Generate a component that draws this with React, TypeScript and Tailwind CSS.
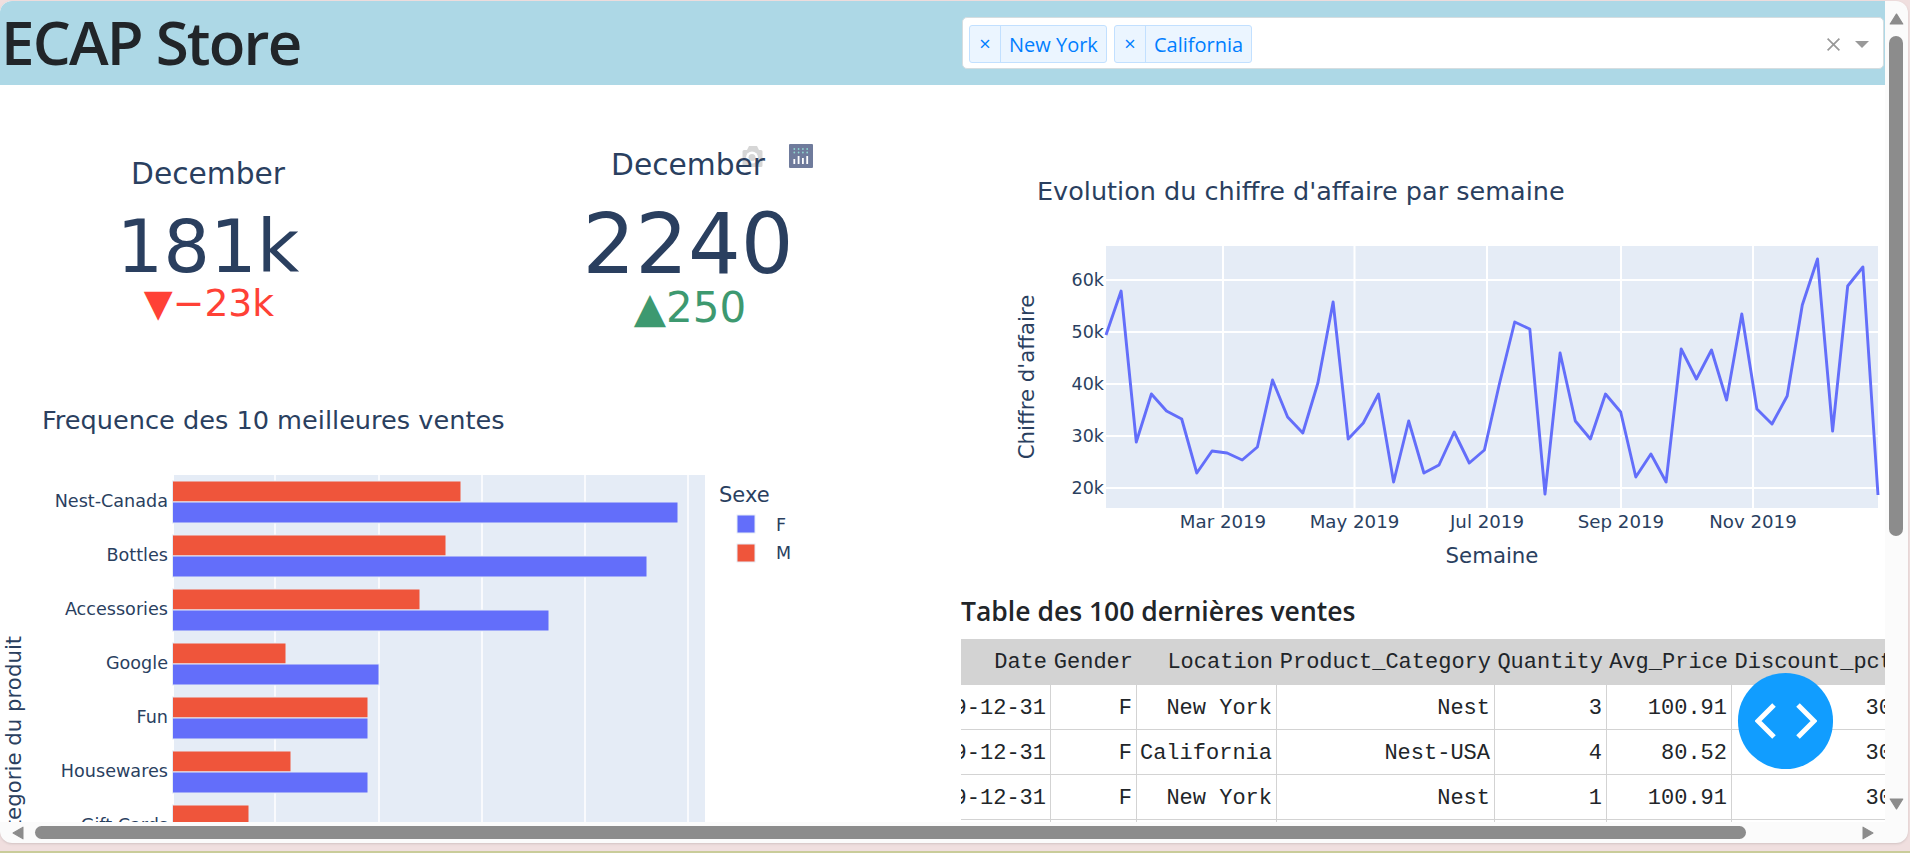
import React from "react";

const verdana = "font-['DejaVu_Sans',sans-serif]";

// weekly revenue, as y pixels in page coordinates
const weekY = [
  335, 291, 442, 394, 411, 419, 473, 451, 453, 460, 447, 380, 417, 433, 383, 302, 439, 423, 394, 482,
  421, 473, 465, 432, 463, 450, 383, 322, 329, 494, 353, 421, 439, 394, 412, 477, 454, 482, 349, 379,
  350, 400, 314, 409, 424, 396, 305, 259, 431, 286, 267, 495,
];
const weekPoints = weekY.map((y, i) => `${(1106 + (i * 772) / 51).toFixed(1)},${y}`).join(" ");

const bars = [
  { name: "Nest-Canada", m: 461, f: 678 },
  { name: "Bottles", m: 446, f: 647 },
  { name: "Accessories", m: 420, f: 549 },
  { name: "Google", m: 286, f: 379 },
  { name: "Fun", m: 368, f: 368 },
  { name: "Housewares", m: 291, f: 368 },
  { name: "Gift Cards", m: 249, f: 300 },
];

const columns = ["Date", "Gender", "Location", "Product_Category", "Quantity", "Avg_Price", "Discount_pct"];
const rows = [
  ["2019-12-31", "F", "New York", "Nest", "3", "100.91", "30"],
  ["2019-12-31", "F", "California", "Nest-USA", "4", "80.52", "30"],
  ["2019-12-31", "F", "New York", "Nest", "1", "100.91", "30"],
  ["2019-12-31", "M", "Chicago", "Nest", "2", "122.77", "30"],
];
const tableCols = "grid grid-cols-[140px_86px_140px_218px_112px_125px_165px]";

const Tag = ({ label, width }: { label: string; width: string }) => (
  <div className={`flex h-[38px] items-stretch rounded-[3px] border border-[#c2e0ff] bg-[#ebf5ff] text-[#007eff] ${width}`}>
    <span className="flex w-[31px] items-center justify-center border-r border-[#c2e0ff] text-[20px]">×</span>
    <span className="flex items-center pt-[1px] pl-[8px] text-[20px]">{label}</span>
  </div>
);

const Header = () => (
  <div className="flex h-[84px] items-start bg-[#add8e6] font-['Open_Sans',sans-serif]">
    <h1 className="mt-[3px] pl-[1px] text-[60px] leading-[76px] font-semibold tracking-[-1.800px] text-[#212529]">ECAP Store</h1>
    <div className="mt-[16px] mr-px ml-auto flex h-[52px] w-[922px] items-center gap-[7px] rounded-[5px] border border-[#d5dde0] bg-white pt-[2px] pl-[6px]">
      <Tag label="New York" width="w-[138px]" />
      <Tag label="California" width="w-[138px]" />
      <svg viewBox="0 0 14 14" className="mr-[7px] ml-auto h-[15px] w-[15px] stroke-[#999999] stroke-[1.600]">
        <path d="M1.500 1.500 12.500 12.500M12.500 1.500 1.500 12.500" />
      </svg>
      <svg viewBox="0 0 14 7" className="mr-[14px] h-[7px] w-[14px] fill-[#999999]">
        <polygon points="0,0 14,0 7,7" />
      </svg>
    </div>
  </div>
);

const Kpis = () => (
  <svg width={955} height={300} className={`block ${verdana}`}>
    <g transform="translate(0 -85)">
      <text x={208} y={184} textAnchor="middle" className="fill-[#2a3f5f] text-[29.700px]">December</text>
      <text x={208} y={272} textAnchor="middle" className="fill-[#2a3f5f] text-[73.500px]">181k</text>
      <text x={209} y={316} textAnchor="middle" className="fill-[#ff4136] text-[37.700px]">▼−23k</text>

      {/* modebar */}
      <path
        d="M744 150h3l2-4h8l2 4h2a1.500 1.500 0 0 1 1.500 1.500v14a1.500 1.500 0 0 1-1.500 1.500h-17a1.500 1.500 0 0 1-1.500-1.500v-14a1.500 1.500 0 0 1 1.500-1.500z"
        className="fill-[#d6d6d6]"
      />
      <circle cx={752} cy={157.500} r={6} className="fill-white" />
      <circle cx={752} cy={157.500} r={3.500} className="fill-[#d6d6d6]" />
      <rect x={789} y={144} width={24} height={24} rx={1} className="fill-[#6f7b9c]" />
      {[794.3, 798.6, 802.9, 807.2].map((x, i) => (
        <g key={x}>
          <circle cx={x} cy={149} r={0.9} className="fill-[#8fd6d0]" />
          <circle cx={x} cy={152.500} r={0.9} className="fill-[#8fd6d0]" />
          <rect x={x - 0.9} y={[159, 156, 158, 156][i]} width={1.8} height={[5, 8, 6, 8][i]} className="fill-white" />
        </g>
      ))}

      <text x={688} y={175} textAnchor="middle" className="fill-[#2a3f5f] text-[29.700px]">December</text>
      <text x={688} y={273} textAnchor="middle" className="fill-[#2a3f5f] text-[83px]">2240</text>
      <text x={690} y={322} textAnchor="middle" className="fill-[#3d9970] text-[42px]">▲250</text>
    </g>
  </svg>
);

const BarChart = () => (
  <svg width={955} height={500} className={`block ${verdana}`}>
    <g transform="translate(0 -385)">
      <text x={42} y={429} className="fill-[#2a3f5f] text-[25.600px]">Frequence des 10 meilleures ventes</text>
      <rect x={174} y={475} width={531} height={400} className="fill-[#e5ecf6]" />
      {[275, 379, 482, 585, 688].map((x) => (
        <line key={x} x1={x} x2={x} y1={475} y2={875} className="stroke-white stroke-[1.500]" />
      ))}
      {bars.map((b, i) => {
        const top = 481 + i * 54;
        return (
          <g key={b.name} className="stroke-[#e5ecf6] stroke-1">
            <rect x={172.500} y={top} width={b.m - 172.500} height={21} className="fill-[#ef553b]" />
            <rect x={172.500} y={top + 21} width={b.f - 172.500} height={21} className="fill-[#636efa]" />
            <text x={168} y={top + 26} textAnchor="end" className="fill-[#2a3f5f] stroke-none text-[17.600px]">
              {b.name}
            </text>
          </g>
        );
      })}
      <text x={21} y={746} textAnchor="middle" transform="rotate(-90 21 746)" className="fill-[#2a3f5f] text-[21.300px]">
        Categorie du produit
      </text>
      <text x={719} y={502} className="fill-[#2a3f5f] text-[21px]">Sexe</text>
      <rect x={737} y={515} width={18} height={18} className="fill-[#636efa] stroke-[#e5ecf6]" />
      <text x={776} y={531} className="fill-[#2a3f5f] text-[17.500px]">F</text>
      <rect x={737} y={544} width={18} height={18} className="fill-[#ef553b] stroke-[#e5ecf6]" />
      <text x={776} y={559} className="fill-[#2a3f5f] text-[17.500px]">M</text>
    </g>
  </svg>
);

const LineChart = () => (
  <svg width={930} height={505} className={`block ${verdana}`}>
    <g transform="translate(-955 -85)">
      <text x={1037} y={200} className="fill-[#2a3f5f] text-[25.500px]">Evolution du chiffre d'affaire par semaine</text>
      <rect x={1106} y={246} width={772} height={262} className="fill-[#e5ecf6]" />
      {[1223, 1354.5, 1487, 1621, 1753].map((x) => (
        <line key={x} x1={x} x2={x} y1={246} y2={508} className="stroke-white stroke-[2]" />
      ))}
      {[
        ["60k", 280],
        ["50k", 332],
        ["40k", 384],
        ["30k", 436],
        ["20k", 488],
      ].map(([label, y]) => (
        <g key={label}>
          <line x1={1106} x2={1878} y1={y} y2={y} className="stroke-white stroke-[2]" />
          <text x={1104} y={Number(y) + 6} textAnchor="end" className="fill-[#2a3f5f] text-[17.500px]">{label}</text>
        </g>
      ))}
      <polyline points={weekPoints} className="fill-none stroke-[#636efa] stroke-[2.900]" strokeLinejoin="round" />
      {[
        ["Mar 2019", 1223],
        ["May 2019", 1354.5],
        ["Jul 2019", 1487],
        ["Sep 2019", 1621],
        ["Nov 2019", 1753],
      ].map(([label, x]) => (
        <text key={label} x={x} y={528} textAnchor="middle" className="fill-[#2a3f5f] text-[18.200px]">{label}</text>
      ))}
      <text x={1492} y={563} textAnchor="middle" className="fill-[#2a3f5f] text-[21.300px]">Semaine</text>
      <text x={1034} y={377} textAnchor="middle" transform="rotate(-90 1034 377)" className="fill-[#2a3f5f] text-[21.300px]">
        Chiffre d'affaire
      </text>
    </g>
  </svg>
);

const SalesTable = () => (
  <div className="pl-[6px]">
    <h4 className="flex h-[49px] items-center pb-[5px] font-['Open_Sans',sans-serif] text-[26.500px] font-semibold text-[#212529]">
      Table des 100 dernières ventes
    </h4>
    <div className="w-[924px] overflow-hidden font-['Liberation_Mono',monospace] text-[22px] text-[#212529]">
      <div className="-ml-[50px] w-[986px]">
        <div className={`${tableCols} h-[46px] items-center bg-[#d3d3d3] pt-[1px]`}>
          {columns.map((c) => (
            <div key={c} className="pr-[4px] text-right">{c}</div>
          ))}
        </div>
        {rows.map((row, i) => (
          <div key={i} className={`${tableCols} h-[45px]`}>
            {row.map((cell, j) => (
              <div key={j} className="flex items-center justify-end border-r border-b border-[#d3d3d3] pt-[2px] pr-[4px]">
                {cell}
              </div>
            ))}
          </div>
        ))}
      </div>
    </div>
  </div>
);

const Arrow = ({ points, className }: { points: string; className: string }) => (
  <svg viewBox="0 0 12 12" preserveAspectRatio="none" className={`fill-[#8c8c8c] stroke-[#8c8c8c] ${className}`}>
    <polygon points={points} strokeLinejoin="round" />
  </svg>
);

export default function App() {
  return (
    <div className="flex h-[853px] w-[1910px] flex-col overflow-hidden bg-[#f0dfdf]">
      <div className="mt-px flex h-[842px] w-[1908px] flex-col overflow-hidden rounded-[12px] bg-[#fbfbfb] shadow-sm">
        <div className="relative flex h-[821px]">
          <main className="w-[1885px] overflow-hidden bg-white">
            <Header />
            <div className="flex">
              <div className="w-[955px]">
                <Kpis />
                <BarChart />
              </div>
              <div className="w-[930px]">
                <LineChart />
                <SalesTable />
              </div>
            </div>
          </main>

          <div className="flex w-[23px] flex-col pt-[12px] pl-[4px]">
            <Arrow points="6,1 11,11 1,11" className="h-[12px] w-[15px]" />
            <div className="mt-[11px] h-[500px] w-[14px] rounded-full bg-[#8c8c8c]" />
            <Arrow points="1,1 11,1 6,11" className="mt-auto mb-[12px] h-[12px] w-[15px]" />
          </div>

          {/* dash debug button */}
          <div className="absolute top-[672px] left-[1738px] flex h-[96px] w-[95px] items-center justify-center gap-[20px] rounded-full bg-[#119dff]">
            <svg viewBox="0 0 21 36" className="h-[36px] w-[21px] fill-none stroke-white stroke-[5]">
              <path d="M19 2 3 18l16 16" />
            </svg>
            <svg viewBox="0 0 21 36" className="h-[36px] w-[21px] fill-none stroke-white stroke-[5]">
              <path d="M2 2l16 16L2 34" />
            </svg>
          </div>
        </div>

        <div className="flex h-[21px] items-center pl-[12px]">
          <Arrow points="11,1 11,11 1,6" className="h-[14px] w-[12px]" />
          <div className="ml-[11px] h-[13px] w-[1711px] rounded-full bg-[#8c8c8c]" />
          <Arrow points="1,1 11,6 1,11" className="ml-[116px] h-[14px] w-[12px]" />
        </div>
      </div>
      <div className="mt-auto h-[2px] bg-[#c9cc9a]" />
    </div>
  );
}
